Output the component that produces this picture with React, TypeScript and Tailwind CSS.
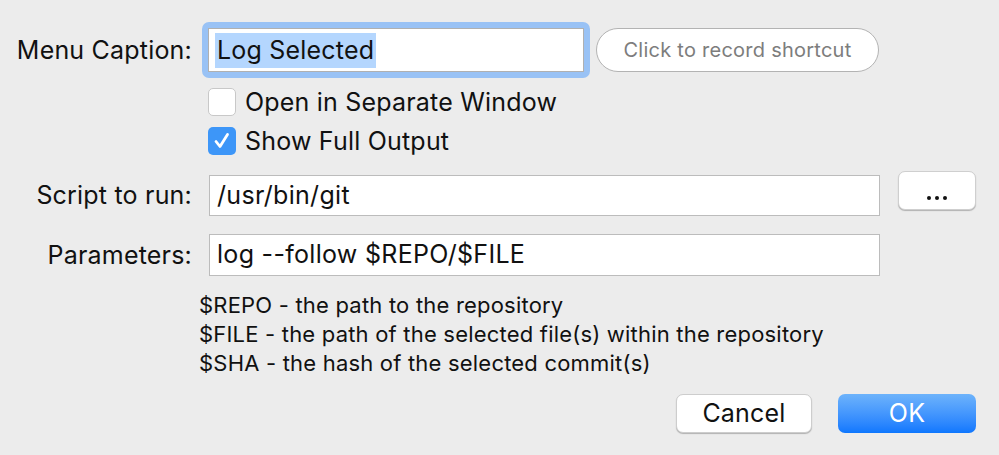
import React from "react";

export default function App() {
  return (
    <div className="w-[999px] h-[455px] bg-[#ececec] pt-[22px] font-['Inter',sans-serif] text-[#111] overflow-hidden">
      {/* Menu caption row */}
      <div className="flex items-center h-[56px]">
        <div className="w-[192px] text-right text-[25px] leading-none tracking-[0.2px] whitespace-nowrap">Menu Caption:</div>
        <div className="ml-[10px] rounded-[7px] bg-[#99c2f5] p-[6px]">
          <div className="w-[376px] h-[44px] bg-white border border-[#b0b0b0] flex items-center pl-[6px]">
            <span className="bg-[#b4d6fe] text-[25px] leading-[35px] px-[2px] tracking-[0.2px]">Log Selected</span>
          </div>
        </div>
        <div className="ml-[6px] w-[283px] h-[44px] rounded-full border border-[#b3b3b3] bg-white flex items-center justify-center text-[20px] text-[#7d7d7d] tracking-[0.25px]">
          Click to record shortcut
        </div>
      </div>

      {/* Checkboxes */}
      <div className="mt-[10px] pl-[208px] flex items-center h-[28px]">
        <div className="w-[28px] h-[28px] rounded-[5px] bg-white border border-[#c8c8c8]" />
        <span className="ml-[9px] text-[25px] leading-none tracking-[0.2px]">Open in Separate Window</span>
      </div>
      <div className="mt-[11px] pl-[208px] flex items-center h-[28px]">
        <div className="w-[28px] h-[28px] rounded-[5px] bg-[#3d96f8] flex items-center justify-center">
          <svg width="20" height="20" viewBox="0 0 20 20" fill="none">
            <path d="M4 10.5 L8 15.5 L15.5 3.5" stroke="white" strokeWidth="2.8" strokeLinecap="round" strokeLinejoin="round" />
          </svg>
        </div>
        <span className="ml-[9px] text-[25px] leading-none tracking-[0.2px]">Show Full Output</span>
      </div>

      {/* Script row */}
      <div className="mt-[16px] flex items-start h-[45px]">
        <div className="w-[192px] h-[49px] flex items-center justify-end text-[25px] leading-none tracking-[0.2px] whitespace-nowrap">Script to run:</div>
        <div className="ml-[17px] mt-[4px] w-[671px] h-[41px] bg-white border border-[#bcbcbc] flex items-center pl-[7px] text-[25px] tracking-[0.3px]">
          /usr/bin/git
        </div>
        <div className="ml-[18px] w-[78px] h-[39px] rounded-[7px] bg-white border border-[#cfcfcf] shadow-[0_1px_1px_rgba(0,0,0,0.25)] flex items-center justify-center">
          <div className="flex gap-[4px] mt-[14px]">
            <span className="w-[4px] h-[4px] rounded-full bg-[#111]" />
            <span className="w-[4px] h-[4px] rounded-full bg-[#111]" />
            <span className="w-[4px] h-[4px] rounded-full bg-[#111]" />
          </div>
        </div>
      </div>

      {/* Parameters row */}
      <div className="mt-[18px] flex items-center h-[42px]">
        <div className="w-[192px] text-right text-[25px] leading-none tracking-[0.2px] whitespace-nowrap">Parameters:</div>
        <div className="ml-[17px] w-[671px] h-[42px] bg-white border border-[#bcbcbc] flex items-center pl-[7px] text-[25px] tracking-[0.3px]">
          log --follow $REPO/$FILE
        </div>
      </div>

      {/* Help text */}
      <div className="mt-[15px] pl-[199px] text-[22px] leading-[29px] tracking-[0.2px]">
        <div>$REPO - the path to the repository</div>
        <div>$FILE - the path of the selected file(s) within the repository</div>
        <div>$SHA - the hash of the selected commit(s)</div>
      </div>

      {/* Buttons */}
      <div className="mt-[16px] flex justify-end pr-[23px] gap-[26px]">
        <div className="w-[136px] h-[39px] rounded-[7px] bg-white border border-[#cdcdcd] shadow-[0_1px_1px_rgba(0,0,0,0.25)] flex items-center justify-center text-[25px] tracking-[0.2px]">
          Cancel
        </div>
        <div className="w-[138px] h-[39px] rounded-[7px] bg-gradient-to-b from-[#6db3fb] to-[#0d77fe] flex items-center justify-center text-[25px] text-white tracking-[0.2px]">
          OK
        </div>
      </div>
    </div>
  );
}
